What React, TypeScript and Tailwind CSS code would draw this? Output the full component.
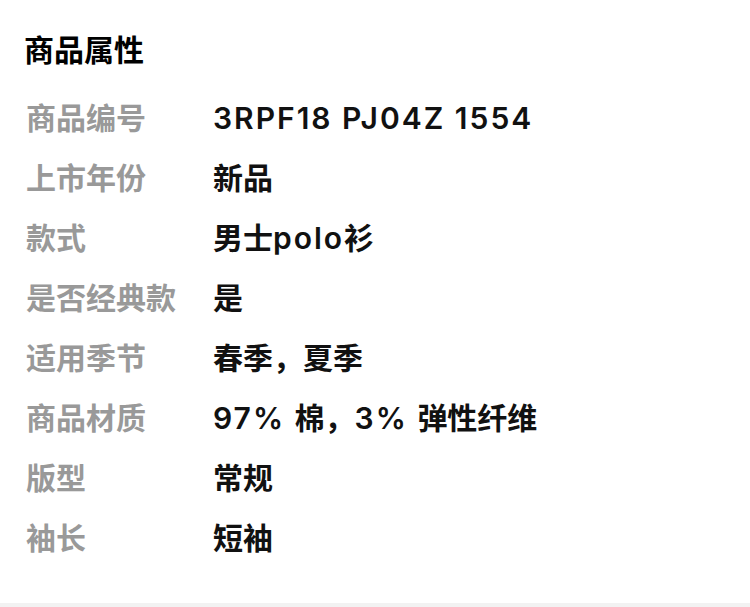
const rows: { label: string; value: string }[] = [
  { label: '商品编号', value: '3RPF18 PJ04Z 1554' },
  { label: '上市年份', value: '新品' },
  { label: '款式', value: '男士polo衫' },
  { label: '是否经典款', value: '是' },
  { label: '适用季节', value: '春季，夏季' },
  { label: '商品材质', value: '97% 棉，3% 弹性纤维' },
  { label: '版型', value: '常规' },
  { label: '袖长', value: '短袖' },
];

// latin runs get a bit of tracking, the reference font is wider than Inter
function Value({ text }: { text: string }) {
  const parts = text.split(/([A-Za-z0-9% ]+)/).filter(Boolean);
  return (
    <span className="text-[30px] font-semibold text-[#111111]">
      {parts.map((p, i) =>
        /[A-Za-z0-9%]/.test(p) ? (
          <span key={i} className="tracking-[2px]">
            {p}
          </span>
        ) : (
          <span key={i}>{p}</span>
        )
      )}
    </span>
  );
}

export default function App() {
  return (
    <div
      className="w-[750px] h-[607px] bg-white flex flex-col"
      style={{ fontFamily: 'Inter, "Noto Sans CJK SC", sans-serif' }}
    >
      <div className="flex-1 px-6 pt-[30px]">
        <h2 className="text-[30px] leading-[40px] font-bold text-black">商品属性</h2>
        <div className="mt-[18px] flex flex-col">
          {rows.map((row) => (
            <div key={row.label} className="h-[60px] flex items-center">
              <span className="w-[189px] pl-[2px] text-[30px] font-bold text-[#999999]">
                {row.label}
              </span>
              <Value text={row.value} />
            </div>
          ))}
        </div>
      </div>
      <div className="h-[4px] bg-[#f2f2f2]" />
    </div>
  );
}
